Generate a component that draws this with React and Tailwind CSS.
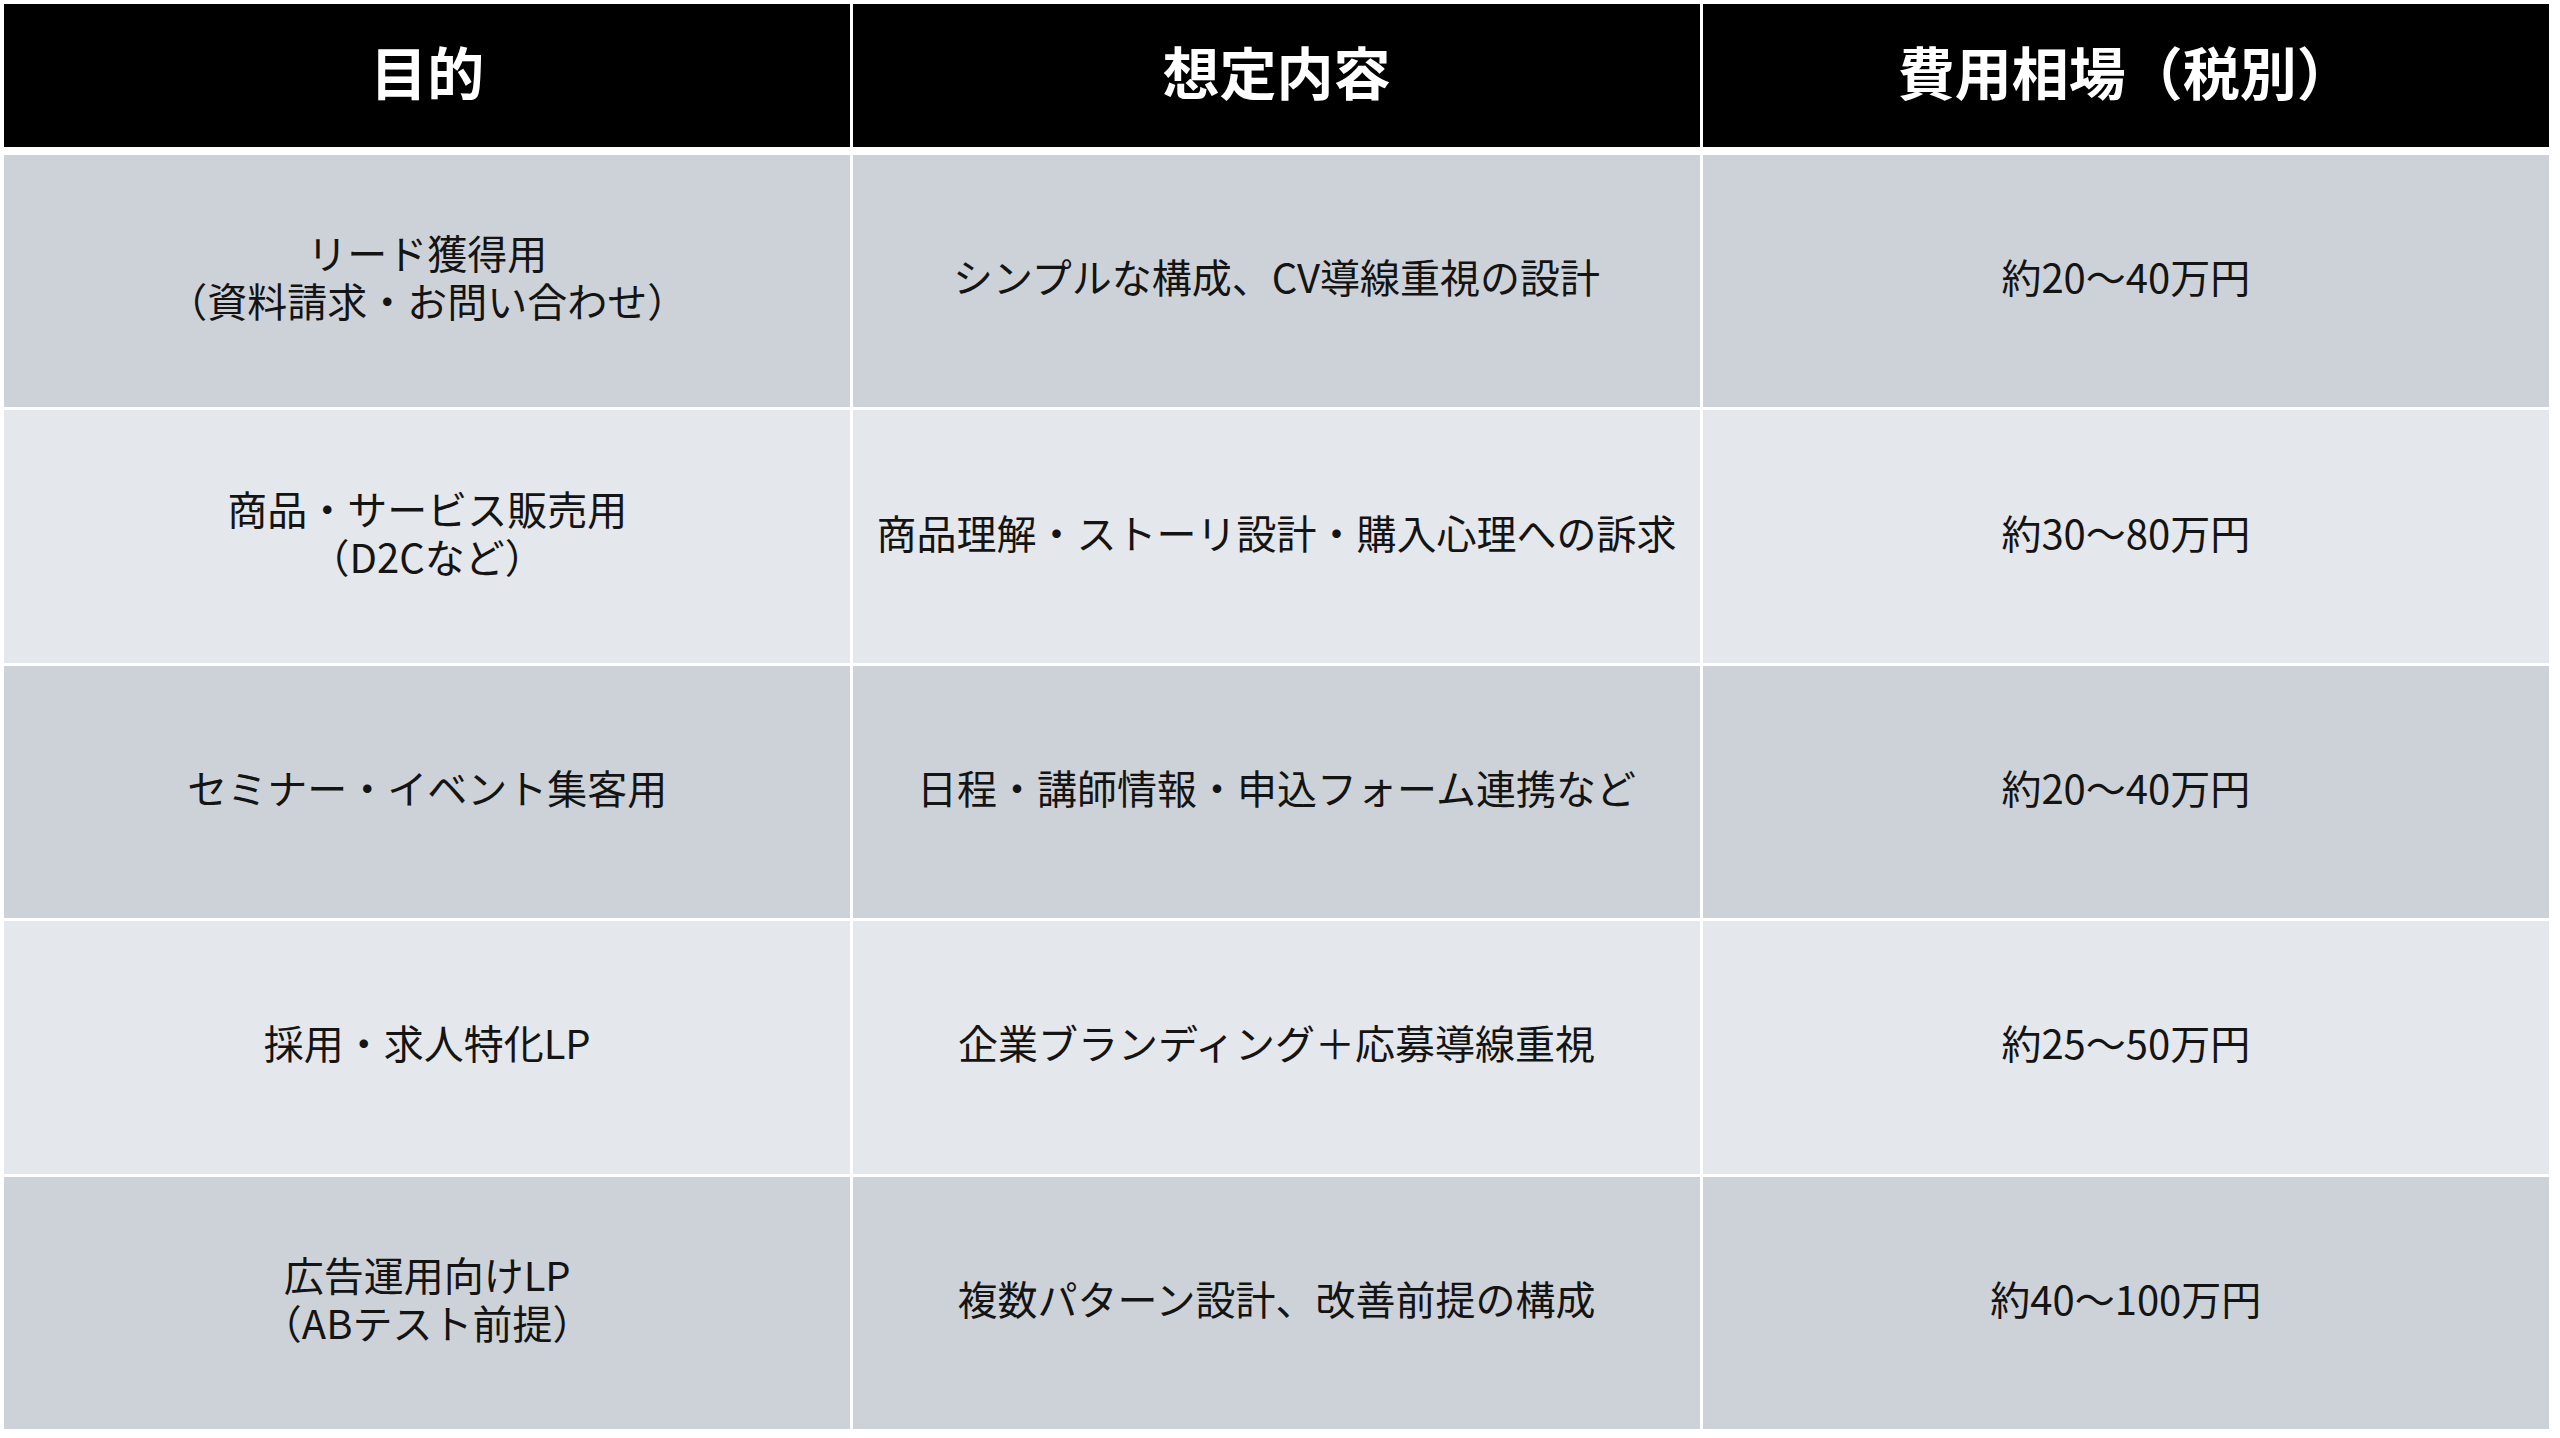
import React from 'react';

const headers = ['目的', '想定内容', '費用相場（税別）'];

const rows = [
  {
    purpose: ['リード獲得用', '（資料請求・お問い合わせ）'],
    content: 'シンプルな構成、CV導線重視の設計',
    price: '約20〜40万円',
  },
  {
    purpose: ['商品・サービス販売用', '（D2Cなど）'],
    content: '商品理解・ストーリ設計・購入心理への訴求',
    price: '約30〜80万円',
  },
  {
    purpose: ['セミナー・イベント集客用'],
    content: '日程・講師情報・申込フォーム連携など',
    price: '約20〜40万円',
  },
  {
    purpose: ['採用・求人特化LP'],
    content: '企業ブランディング＋応募導線重視',
    price: '約25〜50万円',
  },
  {
    purpose: ['広告運用向けLP', '（ABテスト前提）'],
    content: '複数パターン設計、改善前提の構成',
    price: '約40〜100万円',
  },
];

function Cell({ children, shade }) {
  return (
    <div
      className={`flex items-center justify-center pb-[10px] text-center text-[40px] leading-[48px] text-[#141414] ${
        shade ? 'bg-[#cdd2d9]' : 'bg-[#e4e7eb]'
      }`}
    >
      <p>{children}</p>
    </div>
  );
}

export default function App() {
  return (
    <div
      className="w-[2560px] h-[1438px] bg-white pl-[4px] pt-[4px]"
      style={{ fontFamily: '"Noto Sans CJK JP", "Noto Sans", sans-serif' }}
    >
      <div className="w-[2545px] flex flex-col">
        <div className="grid grid-cols-3 gap-x-[3px] h-[143px]">
          {headers.map((h) => (
            <div
              key={h}
              className="bg-black flex items-center justify-center pb-[10px] text-white text-[57px] font-bold"
            >
              {h}
            </div>
          ))}
        </div>
        <div className="mt-[8px] grid grid-cols-3 grid-rows-5 gap-x-[3px] gap-y-[3px] h-[1274px]">
          {rows.map((r, i) => {
            const shade = i % 2 === 0;
            return (
              <React.Fragment key={i}>
                <Cell shade={shade}>
                  {r.purpose.map((line, j) => (
                    <React.Fragment key={line}>
                      {j > 0 && <br />}
                      {line}
                    </React.Fragment>
                  ))}
                </Cell>
                <Cell shade={shade}>{r.content}</Cell>
                <Cell shade={shade}>{r.price}</Cell>
              </React.Fragment>
            );
          })}
        </div>
      </div>
    </div>
  );
}
